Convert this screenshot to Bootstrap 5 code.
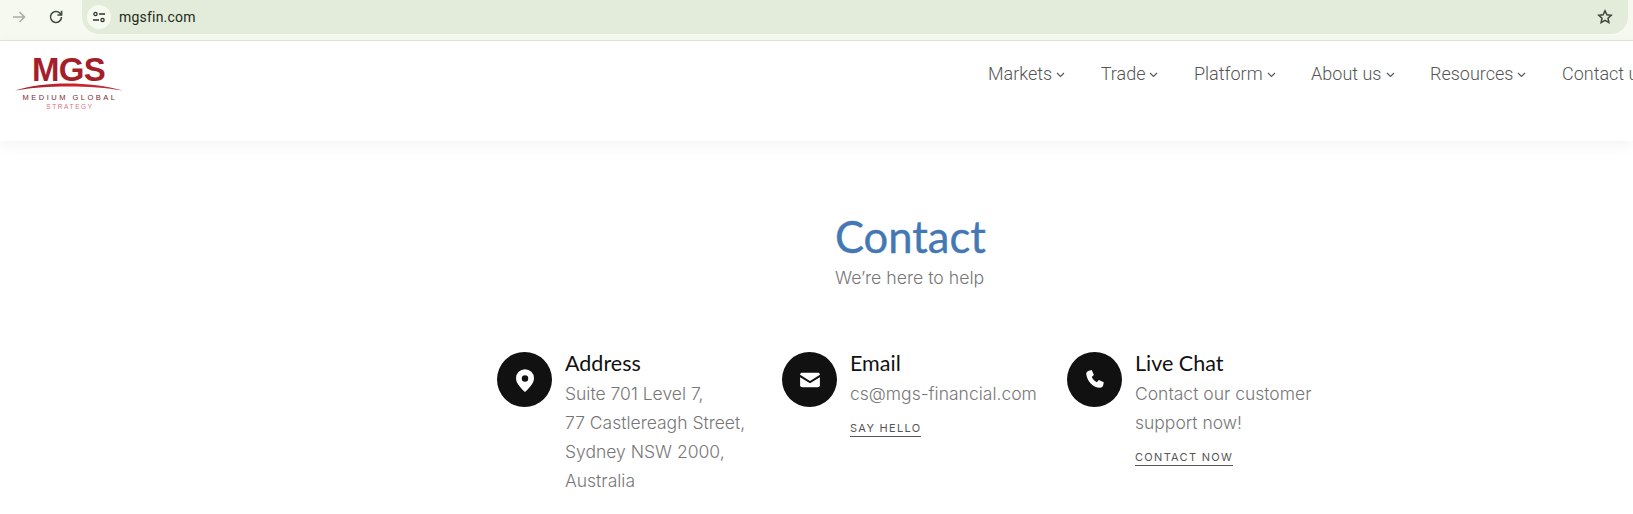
<!DOCTYPE html>
<html lang="en"><head><meta charset="utf-8"><title>Contact</title>
<link href="https://cdn.jsdelivr.net/npm/bootstrap@5.3.0/dist/css/bootstrap.min.css" rel="stylesheet">
<style>
html,body{height:514px;overflow:hidden;background:#fff}
body{font-family:"Lato","Liberation Sans",sans-serif;width:1633px}
.chrome-bar{height:41px;background:#f6f9ef;border-bottom:1px solid #dfe5d3;padding:0 5px 6px 11px}
.chrome-ico{width:16px;height:16px;flex:none}
.chrome-gap{margin-left:21px}
.omni{height:34px;background:#e3ecda;border-radius:0 0 17px 17px;margin-left:18px;padding:0 15px 0 5px;align-self:flex-start}
.site-chip{width:24px;height:24px;background:#f6f9ef;border-radius:50%;flex:none}
.omni-url{font:14px "Roboto",sans-serif;color:#1f2a1c;margin-left:8px;letter-spacing:.2px}
.site-head{height:100px;background:#fff;box-shadow:0 4px 14px rgba(0,0,0,.05);padding:16px 0 0 15px;position:relative}
.logo-box{width:110px;line-height:1;color:#8e2530}
.logo-mgs{display:block;font:700 33px/26px "Liberation Sans",sans-serif;letter-spacing:-.7px;color:#a51f2a;text-align:center;height:25px;padding-right:3px}
.logo-arc{display:block;width:108px;height:10px;margin-top:-1px}
.logo-med{display:block;font:400 7.5px/10px "Liberation Sans",sans-serif;letter-spacing:2.5px;text-align:center;color:#7b2a36;margin-top:2px;white-space:nowrap}
.logo-str{display:block;font:400 6.5px/8px "Liberation Sans",sans-serif;letter-spacing:1.6px;text-align:center;color:#d9727c}
.menu-row{flex-wrap:nowrap;padding-top:22px;position:absolute;left:988px;top:0;white-space:nowrap}
.menu-link{font:300 18px/22px "Roboto",sans-serif;color:#555;text-decoration:none;display:flex;align-items:center;gap:4px;margin-right:35.5px}
.menu-caret{width:9px;height:6px;margin-top:2px}
.hero{padding-top:69px;padding-left:835px}
.hero-title{font-size:43.5px;line-height:52px;font-weight:400;color:#4478b5;margin:0;-webkit-text-stroke:.4px #4478b5}
.hero-sub{font:300 17.7px/25px "Inter",sans-serif;color:#777;margin:3px 0 0;white-space:nowrap}
.info-row{margin-top:62px;margin-left:497px;width:855px}
.info-col{width:285px;flex:none;gap:13px}
.info-dot{width:55px;height:55px;background:#111;border-radius:50%;flex:none}
.info-dot svg{width:22px;height:22px;fill:#fff}
.info-dot .pin-ico{width:24px;height:24px}
.info-head{font-size:21.5px;line-height:26px;color:#111;margin:-2px 0 0;font-weight:400}
.info-text{font:300 17.5px/29px "Inter",sans-serif;color:#777;margin:3px 0 0;white-space:nowrap}
.info-link{display:inline-block;font:400 11px/14px "Inter",sans-serif;letter-spacing:1.3px;color:#555;text-decoration:none;border-bottom:1px solid #555;margin-top:13px;padding-bottom:1px}
</style></head><body>
<div class="chrome-bar d-flex align-items-center">
<svg class="chrome-ico" viewBox="0 0 16 16" fill="none" stroke="#a9afa5" stroke-width="1.6"><path d="M2 8h11M8.500 3l5 5-5 5"/></svg>
<svg class="chrome-ico chrome-gap" viewBox="0 0 16 16" fill="none" stroke="#3f4a3c" stroke-width="1.6"><path d="M13.500 8a5.500 5.500 0 1 1-1.600-3.900L13.500 6"/><path d="M13.600 1.800V6H9.400"/></svg>
<div class="omni flex-grow-1 d-flex align-items-center">
<div class="site-chip d-flex align-items-center justify-content-center"><svg width="14" height="14" viewBox="0 0 14 14" fill="none" stroke="#2c352a" stroke-width="1.3"><circle cx="3.500" cy="4" r="1.600"/><path d="M7 4h6M1 10h6"/><circle cx="10.500" cy="10" r="1.600"/></svg></div>
<span class="omni-url">mgsfin.com</span>
<svg class="chrome-ico ms-auto" viewBox="0 0 16 16" fill="none" stroke="#3b4439" stroke-width="1.5"><path d="M8 1.800l1.900 4 4.300.5-3.200 3 .9 4.300L8 11.400l-3.900 2.200.9-4.300-3.200-3 4.300-.5z"/></svg>
</div></div>
<header class="site-head">
<div class="logo-box"><span class="logo-mgs">MGS</span>
<svg class="logo-arc" viewBox="0 0 108 10"><defs><linearGradient id="arcfill" x1="0" x2="1" y1="0" y2="0"><stop offset="0" stop-color="#9c1f2a"/><stop offset=".55" stop-color="#d0202c"/><stop offset="1" stop-color="#a93a46"/></linearGradient></defs><path d="M0 9.500C28 0 76 0 108 9.500 76 4 30 4 0 9.500z" fill="url(#arcfill)"/></svg>
<span class="logo-med">MEDIUM GLOBAL</span><span class="logo-str">STRATEGY</span></div>
<nav class="menu-row d-flex">
<a class="menu-link" href="#">Markets <svg class="menu-caret" viewBox="0 0 9 6" fill="none" stroke="#555" stroke-width="1.1"><path d="M1 1l3.500 3.500L8 1"/></svg></a>
<a class="menu-link" href="#">Trade <svg class="menu-caret" viewBox="0 0 9 6" fill="none" stroke="#555" stroke-width="1.1"><path d="M1 1l3.500 3.500L8 1"/></svg></a>
<a class="menu-link" href="#">Platform <svg class="menu-caret" viewBox="0 0 9 6" fill="none" stroke="#555" stroke-width="1.1"><path d="M1 1l3.500 3.500L8 1"/></svg></a>
<a class="menu-link" href="#">About us <svg class="menu-caret" viewBox="0 0 9 6" fill="none" stroke="#555" stroke-width="1.1"><path d="M1 1l3.500 3.500L8 1"/></svg></a>
<a class="menu-link" href="#">Resources <svg class="menu-caret" viewBox="0 0 9 6" fill="none" stroke="#555" stroke-width="1.1"><path d="M1 1l3.500 3.500L8 1"/></svg></a>
<a class="menu-link" href="#">Contact us</a>
</nav></header>
<main>
<section class="hero"><h1 class="hero-title">Contact</h1><p class="hero-sub">We’re here to help</p></section>
<section class="info-row d-flex">
<div class="info-col d-flex"><div class="info-dot d-flex align-items-center justify-content-center"><svg class="pin-ico" viewBox="0 0 20 20"><path fill-rule="evenodd" d="M10 1a7.500 7.500 0 0 0-7.500 7.500C2.500 13 7 17 10 20c3-3 7.500-7 7.500-11.500A7.500 7.500 0 0 0 10 1zm0 5a2.700 2.700 0 1 1 0 5.400A2.700 2.700 0 0 1 10 6z"/></svg></div>
<div><h3 class="info-head">Address</h3><p class="info-text">Suite 701 Level 7,<br>77 Castlereagh Street,<br>Sydney NSW 2000,<br>Australia</p></div></div>
<div class="info-col d-flex"><div class="info-dot d-flex align-items-center justify-content-center"><svg viewBox="0 0 20 20"><path d="M1 5.200C1 4 2 3.500 3 3.500h14c1 0 2 .5 2 1.700L10 11zM1 7.500V15c0 1 1 1.500 2 1.500h14c1 0 2-.5 2-1.500V7.500l-9 5.500z"/></svg></div>
<div><h3 class="info-head">Email</h3><p class="info-text">cs@mgs-financial.com</p><a class="info-link" href="#">SAY HELLO</a></div></div>
<div class="info-col d-flex"><div class="info-dot d-flex align-items-center justify-content-center"><svg viewBox="0 0 20 20"><path d="M4.500 1.500l2.500-.5 2 4.500-2 1.800c.8 2 2.700 3.900 4.700 4.700l1.800-2 4.500 2-.5 2.500c-.3 1.500-1.500 2.500-3 2.500C8.500 17 3 11.500 2 4.500c0-1.500 1-2.700 2.500-3z"/></svg></div>
<div><h3 class="info-head">Live Chat</h3><p class="info-text">Contact our customer<br>support now!</p><a class="info-link" href="#">CONTACT NOW</a></div></div>
</section></main>
<script src="https://cdn.jsdelivr.net/npm/bootstrap@5.3.0/dist/js/bootstrap.bundle.min.js"></script>
</body></html>
